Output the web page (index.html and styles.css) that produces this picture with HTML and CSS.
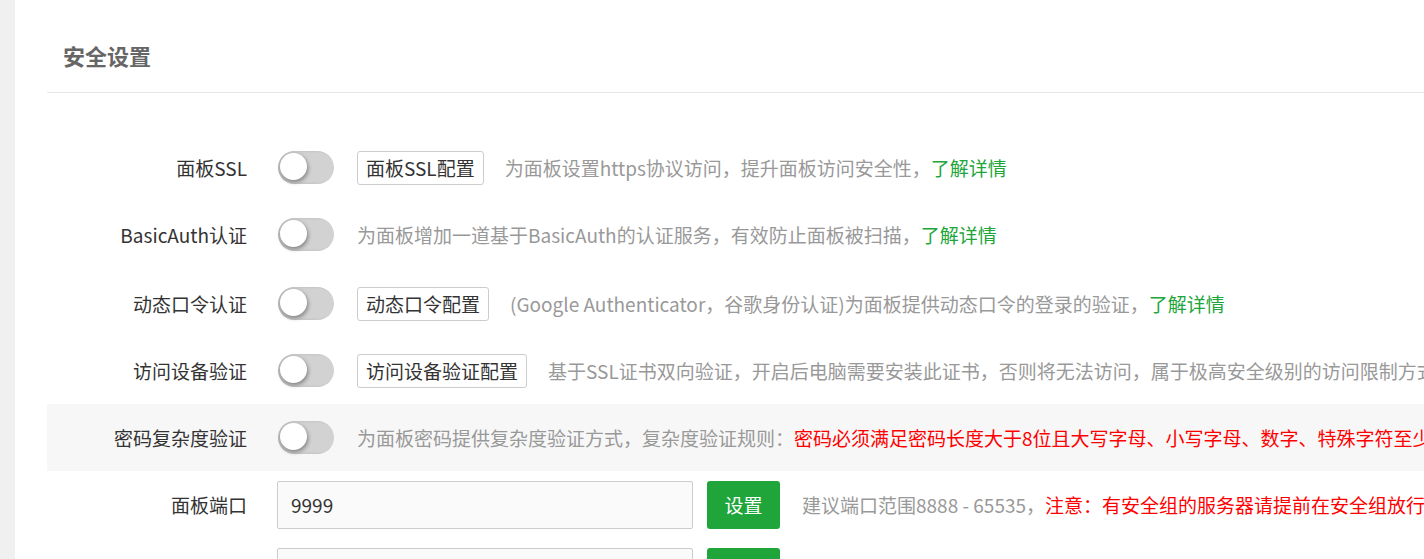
FILE: index.html
```html
<!DOCTYPE html>
<html lang="zh-CN">
<head>
<meta charset="utf-8">
<title>安全设置</title>
<link rel="stylesheet" href="styles.css">
</head>
<body>
<div class="panel">
  <div class="panel-head">安全设置</div>
  <div class="panel-body">
    <div class="row">
      <div class="label">面板SSL</div>
      <div class="ctrl">
        <span class="switch"><span class="knob"></span></span>
        <button class="btn-outline">面板SSL配置</button>
        <span class="desc">为面板设置https协议访问，提升面板访问安全性，<a class="link">了解详情</a></span>
      </div>
    </div>
    <div class="row">
      <div class="label">BasicAuth认证</div>
      <div class="ctrl">
        <span class="switch"><span class="knob"></span></span>
        <span class="desc">为面板增加一道基于BasicAuth的认证服务，有效防止面板被扫描，<a class="link">了解详情</a></span>
      </div>
    </div>
    <div class="row row-tall">
      <div class="label">动态口令认证</div>
      <div class="ctrl">
        <span class="switch"><span class="knob"></span></span>
        <button class="btn-outline">动态口令配置</button>
        <span class="desc">(Google Authenticator，谷歌身份认证)为面板提供动态口令的登录的验证，<a class="link">了解详情</a></span>
      </div>
    </div>
    <div class="row">
      <div class="label">访问设备验证</div>
      <div class="ctrl">
        <span class="switch"><span class="knob"></span></span>
        <button class="btn-outline">访问设备验证配置</button>
        <span class="desc">基于SSL证书双向验证，开启后电脑需要安装此证书，否则将无法访问，属于极高安全级别的访问限制方式</span>
      </div>
    </div>
    <div class="row row-hl">
      <div class="label">密码复杂度验证</div>
      <div class="ctrl">
        <span class="switch"><span class="knob"></span></span>
        <span class="desc">为面板密码提供复杂度验证方式，复杂度验证规则：<span class="red">密码必须满足密码长度大于8位且大写字母、小写字母、数字、特殊字符至少3项组合</span></span>
      </div>
    </div>
    <div class="row">
      <div class="label">面板端口</div>
      <div class="ctrl">
        <input class="field" type="text" value="9999">
        <button class="btn-green">设置</button>
        <span class="desc">建议端口范围8888 - 65535，<span class="red">注意：有安全组的服务器请提前在安全组放行新端口</span></span>
      </div>
    </div>
    <div class="row">
      <div class="label">安全入口</div>
      <div class="ctrl">
        <input class="field" type="text" value="">
        <button class="btn-green">设置</button>
        <span class="desc">面板管理入口，设置后只能通过指定安全入口登录面板</span>
      </div>
    </div>
  </div>
</div>
</body>
</html>
```

FILE: styles.css
```css
* { box-sizing: border-box; }
html, body { margin: 0; padding: 0; }
body {
  background: #f0f0f0;
  font-family: "Noto Sans CJK SC", "Noto Sans", sans-serif;
  overflow: hidden;
  height: 559px;
}
.panel {
  margin-left: 15px;
  background: #fff;
  min-height: 100vh;
  padding-left: 32px;
  overflow: hidden;
  white-space: nowrap;
}
.panel-head {
  height: 93px;
  border-bottom: 1px solid #e6e6e6;
  padding-left: 16px;
  padding-top: 18px;
  font-size: 22px;
  font-weight: bold;
  color: #666;
  display: flex;
  align-items: center;
}
.panel-body {
  padding-top: 41px;
}
.row {
  height: 67px;
  display: flex;
  align-items: center;
}
.row-tall { height: 69px; padding-top: 2px; }
.row-hl { background: #f7f7f7; }
.label {
  width: 200px;
  flex: none;
  text-align: right;
  font-size: 19px;
  color: #333;
  margin-right: 30px;
}
.ctrl {
  display: flex;
  align-items: center;
  flex: none;
}
.switch {
  position: relative;
  width: 56px;
  height: 33px;
  border-radius: 17px;
  background: #d2d2d2;
  box-shadow: inset 2px 0 3px rgba(0,0,0,.12);
  margin-left: 1px;
  margin-right: 23px;
  flex: none;
}
.knob {
  position: absolute;
  left: 2px;
  top: 2px;
  width: 27px;
  height: 27px;
  border-radius: 50%;
  background: #fff;
  box-shadow: 1px 2px 4px rgba(0,0,0,.4);
}
.btn-outline {
  font-family: inherit;
  font-size: 19px;
  color: #333;
  background: #fff;
  border: 1px solid #ccc;
  border-radius: 3px;
  height: 34px;
  padding: 0 8px;
  margin-right: 21px;
  line-height: 32px;
  cursor: pointer;
}
.desc {
  font-size: 19px;
  color: #999;
}
.link { color: #20a53a; text-decoration: none; }
.red { color: #f00; }
.field {
  width: 416px;
  height: 48px;
  border: 1px solid #ccc;
  border-radius: 2px;
  background: #fafafa;
  font-family: inherit;
  font-size: 19px;
  color: #333;
  padding: 0 13px;
  margin-right: 14px;
}
.btn-green {
  font-family: inherit;
  height: 48px;
  width: 73px;
  border: none;
  border-radius: 3px;
  background: #20a53a;
  color: #fff;
  font-size: 19px;
  margin-right: 22px;
  cursor: pointer;
}
```
